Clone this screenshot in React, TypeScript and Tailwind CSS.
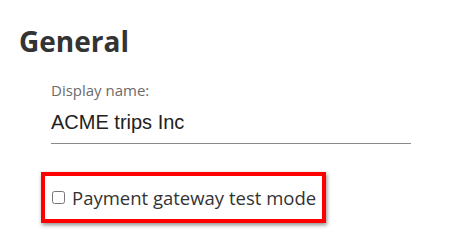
export default function App() {
    return (
        <div className="w-[454px] h-[234px] bg-white overflow-hidden" style={{ fontFamily: '"Open Sans", sans-serif' }}>
            <div className="pl-[19px] pt-[21px]">
                <h1 className="text-[28px] leading-[40px] font-bold text-[#333333]">General</h1>
            </div>

            <div className="pl-[51px] pt-[19px] w-[411px]">
                <label className="block text-[15px] leading-[20px] text-[#6b6b6b]">Display name:</label>
                <div className="border-b border-[#8a8a8a] pt-[10px] pb-[9px]">
                    <span className="block text-[20px] leading-[24px] text-[#222222]" style={{ fontFamily: '"Liberation Sans", Arial, sans-serif' }}>
                        ACME trips Inc
                    </span>
                </div>
            </div>

            {/* Highlighted checkbox row */}
            <div className="pl-[41px] pt-[28px]">
                <div className="inline-flex items-center gap-[7px] border-4 border-[#ff0000] pl-[7px] pr-[6px] h-[51px] shadow-[1px_2px_4px_rgba(0,0,0,0.45)]">
                    <input type="checkbox" className="w-[13px] h-[13px] m-0" />
                    <span className="text-[18.5px] text-[#333333]">Payment gateway test mode</span>
                </div>
            </div>
        </div>
    );
}
